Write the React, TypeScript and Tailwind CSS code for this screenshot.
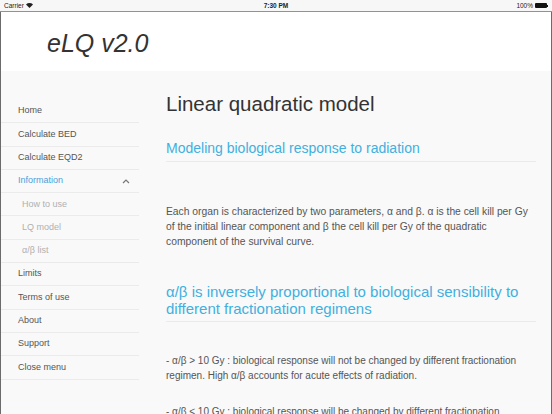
import React from "react";

const font = { fontFamily: '"Liberation Sans", Arial, sans-serif' };

function MenuItem({ label, sub, active, chevron }: { label: string; sub?: boolean; active?: boolean; chevron?: boolean }) {
  return (
    <div
      className={`flex items-center justify-between h-[23.3px] border-b border-[#ebebeb] text-[9px] ${sub ? "pl-[21px] text-[#b0b0b0]" : "pl-[17px]"} ${active ? "text-[#4a9fdc]" : sub ? "" : "text-[#555]"} pr-[8px]`}
    >
      <span>{label}</span>
      {chevron && (
        <svg width="8" height="5" viewBox="0 0 8 5" className="mr-[1px]">
          <path d="M1 4 L4 1 L7 4" fill="none" stroke="#777" strokeWidth="1.2" />
        </svg>
      )}
    </div>
  );
}

export default function App() {
  return (
    <div className="w-[552px] h-[414px] overflow-hidden flex flex-col bg-[#f9f9f9]" style={font}>
      {/* status bar */}
      <div className="h-[11px] bg-[#f7f7f7] flex items-center justify-between px-[4px] text-[6.5px] text-[#222] relative">
        <div className="flex items-center gap-[2px]">
          <span>Carrier</span>
          <svg width="7" height="5" viewBox="0 0 14 10">
            <path d="M7 10 L0 3 A10 10 0 0 1 14 3 Z" fill="#222" />
          </svg>
        </div>
        <span className="absolute left-1/2 -translate-x-1/2 font-bold">7:30 PM</span>
        <div className="flex items-center gap-[2px]">
          <span>100%</span>
          <div className="flex items-center">
            <div className="w-[12px] h-[5px] bg-[#111] rounded-[1px]" />
            <div className="w-[1px] h-[2px] bg-[#111]" />
          </div>
        </div>
      </div>
      <div className="h-[1px] bg-[#4aa8dc]" />
      <div className="flex-1 flex flex-col border-l border-r border-[#6b6b6b] min-h-0">
        {/* header */}
        <div className="h-[59px] shrink-0 bg-white flex items-center pl-[46px] pt-[4px]">
          <span className="text-[25px] italic font-light text-[#333]">eLQ v2.0</span>
        </div>
        <div className="flex-1 flex min-h-0">
          {/* sidebar */}
          <div className="w-[138px] pt-[29px] shrink-0">
            <MenuItem label="Home" />
            <MenuItem label="Calculate BED" />
            <MenuItem label="Calculate EQD2" />
            <MenuItem label="Information" active chevron />
            <MenuItem label="How to use" sub />
            <MenuItem label="LQ model" sub />
            <MenuItem label="α/β list" sub />
            <MenuItem label="Limits" />
            <MenuItem label="Terms of use" />
            <MenuItem label="About" />
            <MenuItem label="Support" />
            <MenuItem label="Close menu" />
          </div>
          {/* content */}
          <div className="flex-1 pl-[27px] pr-[15px] pt-[20px]">
            <h1 className="text-[20.5px] font-light text-[#333] leading-[26px]">Linear quadratic model</h1>
            <h2 className="mt-[22px] text-[14px] text-[#3fb0e0] leading-[18px] pb-[4px] border-b border-[#ebebeb]">
              Modeling biological response to radiation
            </h2>
            <p className="mt-[42px] text-[10.3px] leading-[15px] text-[#555]">
              Each organ is characterized by two parameters, α and β. α is the cell kill per Gy
              <br />
              of the initial linear component and β the cell kill per Gy of the quadratic
              <br />
              component of the survival curve.
            </p>
            <h2 className="mt-[34px] text-[15px] text-[#3fb0e0] leading-[17px] pb-[4px] border-b border-[#ebebeb]">
              α/β is inversely proportional to biological sensibility to different fractionation regimens
            </h2>
            <p className="mt-[31px] text-[10px] leading-[15px] text-[#555]">
              - α/β &gt; 10 Gy : biological response will not be changed by different fractionation regimen. High α/β accounts for acute effects of radiation.
            </p>
            <p className="mt-[21px] text-[10px] leading-[15px] text-[#555]">
              - α/β &lt; 10 Gy : biological response will be changed by different fractionation regimen. Low α/β accounts for late effects of radiation.
            </p>
          </div>
        </div>
      </div>
    </div>
  );
}
